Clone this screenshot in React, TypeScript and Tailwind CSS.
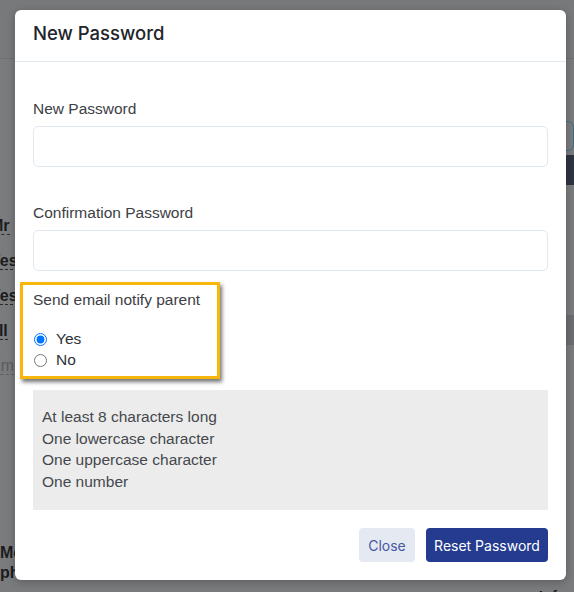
import React from 'react'

const RULES = ['At least 8 characters long', 'One lowercase character', 'One uppercase character', 'One number']

function Field({ label }: { label: string }) {
  return (
    <div className="flex flex-col">
      <label className="text-[15.5px] leading-[18px] text-[#3d4045] mb-[8px]">{label}</label>
      <input
        type="password"
        className="h-[41px] w-full rounded-[5px] border border-[#e1e8ef] bg-white px-3 outline-none"
      />
    </div>
  )
}

function Backdrop() {
  return (
    <div className="flex h-full flex-col">
      <div className="h-[59px] shrink-0 border-b border-[#6e6f71] bg-[#78797b]" />
      <div className="flex flex-1 justify-between">
        <div className="flex flex-col pt-[157px] -ml-[10px] text-[16px] font-bold text-[#1b1c1e]">
          <span className="h-[35px] leading-[20px]"><span className="border-b border-dashed border-[#2a2a2a]">Mr</span></span>
          <span className="h-[35px] leading-[20px]"><span className="border-b border-dashed border-[#2a2a2a]">Yes</span></span>
          <span className="h-[35px] leading-[20px]"><span className="border-b border-dashed border-[#2a2a2a]">Yes</span></span>
          <span className="h-[35px] leading-[20px]"><span className="border-b border-dashed border-[#2a2a2a]">all</span></span>
          <span className="h-[35px] leading-[20px] font-normal text-[#5c5d60]"><span className="border-b border-dashed border-[#5c5d60]">Em</span></span>
          <span className="mt-[152px] leading-[20px] ml-[10px]">Mo</span>
          <span className="leading-[20px] ml-[10px]">ph</span>
        </div>
        <div className="flex flex-col items-end pt-[62px]">
          <div className="h-[30px] w-[14px] rounded-r-md border border-[#3f6f86]" />
          <div className="mt-[4px] h-[30px] w-[8px] bg-[#2f3442]" />
          <div className="mt-[130px] h-[30px] w-[8px] bg-[#6c6d70]" />
          <span className="mt-[240px] pr-[2px] text-[15px] font-bold text-[#1b1c1e]">Infor</span>
        </div>
      </div>
    </div>
  )
}

export default function App() {
  return (
    <div className="relative h-[592px] w-[574px] overflow-hidden bg-[#7a7b7d] font-['Liberation_Sans',Arial,sans-serif]">
      <Backdrop />

      <div className="absolute left-[15px] top-[10px] w-[551px] rounded-[6px] bg-white shadow-[0_2px_8px_rgba(0,0,0,0.25)]">
        <div className="flex h-[52px] items-center border-b border-[#e2e9f0] px-[18px]">
          <h2 className="font-['Inter',sans-serif] text-[18.5px] font-medium text-[#22252a] pb-[4px]">New Password</h2>
        </div>

        <div className="flex flex-col px-[18px] pt-[38px]">
          <Field label="New Password" />
          <div className="mt-[37px]">
            <Field label="Confirmation Password" />
          </div>

          <div className="-mx-[13px] mt-[11px] w-[200px] border-[3px] border-[#f5b70c] px-[10px] pt-[6px] pb-[7px] shadow-[2px_3px_4px_rgba(0,0,0,0.55)]">
            <p className="text-[15.5px] leading-[18px] text-[#3d4045]">Send email notify parent</p>
            <div className="mt-[21px] flex flex-col gap-[3px] text-[15.5px] text-[#2f3237]">
              <label className="flex h-[18px] items-center gap-[9px]">
                <input type="radio" name="notify" defaultChecked className="m-0 ml-[1px] h-[13px] w-[13px]" />
                Yes
              </label>
              <label className="flex h-[18px] items-center gap-[9px]">
                <input type="radio" name="notify" className="m-0 ml-[1px] h-[13px] w-[13px]" />
                No
              </label>
            </div>
          </div>

          <div className="mt-[11px] bg-[#ececec] px-[9px] pt-[16px] pb-[18px] text-[15.5px] leading-[21.5px] text-[#45484d]">
            {RULES.map(r => (
              <p key={r}>{r}</p>
            ))}
          </div>
        </div>

        <div className="flex justify-end gap-[11px] px-[18px] pt-[18px] pb-[18px] font-['Inter',sans-serif] text-[14px]">
          <button className="h-[34px] w-[56px] rounded-[4px] bg-[#e5e9f2] text-[#4658a3]">Close</button>
          <button className="h-[34px] w-[122px] rounded-[4px] bg-[#243b8f] text-white">Reset Password</button>
        </div>
      </div>
    </div>
  )
}
